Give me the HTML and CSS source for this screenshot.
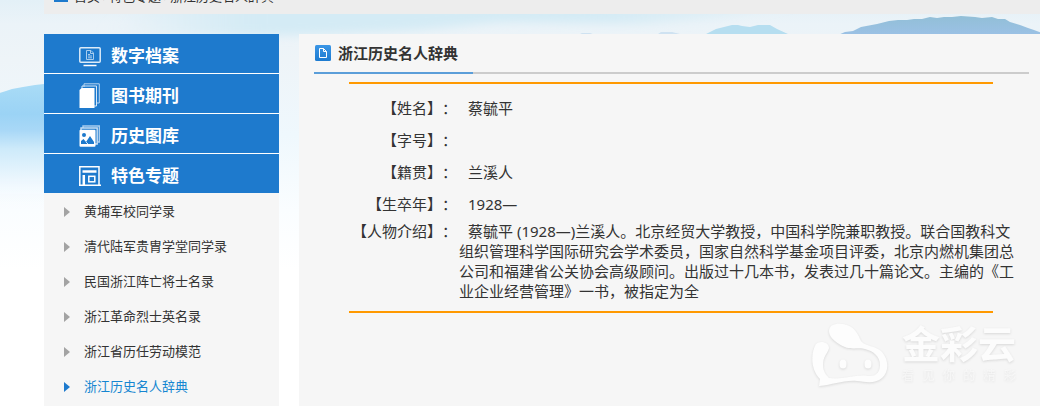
FILE: index.html
```html
<!DOCTYPE html>
<html lang="zh-CN">
<head>
<meta charset="utf-8">
<meta name="viewport" content="width=device-width, initial-scale=1">
<title>浙江历史名人辞典</title>
<link rel="stylesheet" href="styles.css">
</head>
<body>
<svg class="scenery" viewBox="0 0 1040 300" preserveAspectRatio="none" aria-hidden="true">
  <defs>
    <linearGradient id="sky" x1="0" y1="0" x2="0" y2="1">
      <stop offset="0" stop-color="#e3f0f7"/><stop offset=".08" stop-color="#ebf3f8"/><stop offset=".2" stop-color="#eef4f8"/>
      <stop offset=".45" stop-color="#eff8fd"/><stop offset=".7" stop-color="#fafdff"/><stop offset=".9" stop-color="#fff"/>
    </linearGradient>
    <linearGradient id="glow" x1="0" y1="0" x2="1" y2="0">
      <stop offset="0" stop-color="#d4ebf5" stop-opacity="0"/><stop offset=".2" stop-color="#d4ebf5"/>
      <stop offset=".7" stop-color="#d4ebf5"/><stop offset="1" stop-color="#d6ecf5" stop-opacity="0"/>
    </linearGradient>
    <linearGradient id="hill" x1="0" y1="0" x2="0" y2="1">
      <stop offset="0" stop-color="#aadcf6"/><stop offset=".25" stop-color="#9bd3f5"/><stop offset=".38" stop-color="#a9d8f7"/>
      <stop offset=".52" stop-color="#cdeafa"/><stop offset=".75" stop-color="#eaf6fd"/><stop offset="1" stop-color="#fbfdff" stop-opacity="0"/>
    </linearGradient>
    <linearGradient id="ridge" x1="0" y1="0" x2="0" y2="1">
      <stop offset="0" stop-color="#92bfd7"/><stop offset="1" stop-color="#9cc1e6"/>
    </linearGradient>
    <filter id="soft" x="-5%" y="-40%" width="110%" height="180%"><feGaussianBlur stdDeviation="12 5"/></filter>
    <filter id="edge"><feGaussianBlur stdDeviation=".5"/></filter>
  </defs>
  <rect width="1040" height="300" fill="url(#sky)"/>
  <path filter="url(#soft)" fill="url(#glow)" d="M110 34L150 0H810L720 18L640 24L500 22L420 30L330 34L260 36Z"/>
  <path filter="url(#edge)" fill="url(#hill)" d="M-4 94L6 91L12 89L23 87L35 85L44 84L60 82V210H-4Z"/>
  <path filter="url(#edge)" fill="#cfe2f1" d="M576 36L582 33L590 33L598 36ZM655 36L661 32L672 32L684 35Z"/>
  <path filter="url(#edge)" fill="#b6def0" d="M704 35L716 29L724 27L732 25L738 25L742 26L750 27L758 25L770 25L777 29L788 34Z"/>
  <path filter="url(#edge)" fill="url(#ridge)" d="M838 35L845 32L853 31L861 27L877 24L889 21L898 20L907 20L914 19L922 19L930 17L937 18L944 17L952 17L961 16L975 17L982 18L992 17L998 19L1005 19L1010 22L1020 25L1028 28L1034 30L1042 33V36Z"/>
</svg>

<div class="page">
  <nav class="crumbs" aria-label="位置">
    <svg width="14" height="12" viewBox="0 0 14 12" aria-hidden="true"><path fill="#1e7acd" d="M7 0L13 5H11V10H14V12H0V10H3V5H1Z"/><path fill="#ededed" d="M6 7H8V10H6Z"/></svg>
    <a href="#">首页</a><span>›</span><a href="#">特色专题</a><span>›</span><a href="#">浙江历史名人辞典</a>
  </nav>

  <div class="columns">
    <aside class="sidebar">
      <nav class="menu">
        <a href="#">
          <svg class="icon" viewBox="0 0 22 22" fill="none" stroke="#dcebf8" aria-hidden="true"><rect x=".8" y="2.8" width="20.4" height="14.4" rx="1" stroke-width="1.5"/><path d="M7.5 5.5H12L14.5 8V14.5H7.5ZM11.5 5.5V8.5H14.5M9 9.5H11M9 11H13M9 12.8H13" stroke="#a9cdee"/><path d="M4.500 20.500H17.500" stroke="#fff" stroke-width="1.500"/></svg>
          数字档案</a>
        <a href="#">
          <svg class="icon icon-tall" viewBox="0 0 22 26" aria-hidden="true"><path d="M5 4V.8H20.300V20H18" fill="none" stroke="#b7d5f0"/><path d="M3 5V3H17.500V23H15" fill="none" stroke="#d6e7f7"/><path fill="#fff" d="M2.500 5H15.500V25H.5V7Z"/></svg>
          图书期刊</a>
        <a href="#">
          <svg class="icon" viewBox="0 0 22 22" aria-hidden="true"><path d="M4 3V1H20.300V17H19" fill="none" stroke="#a9cdee" stroke-width="1.400"/><path d="M2 5V3H18.200V19H16" fill="none" stroke="#c9dff4" stroke-width="1.400"/><rect x=".5" y="4.800" width="16" height="17" rx="1" fill="#fff"/><circle cx="5" cy="10" r="2" fill="#1e7acd"/><path fill="#1e7acd" d="M2 19V16L4.500 14L7 17L11 11L15 17V19Z"/><path stroke="#fff" stroke-width=".8" d="M7 17L9 19"/></svg>
          历史图库</a>
        <a href="#">
          <svg class="icon" viewBox="0 0 22 22" fill="none" stroke="#fff" aria-hidden="true"><path d="M.8 21V1.800H20V20.300M0 20.300H22" stroke-width="1.500"/><path d="M3.500 6.500H17.500" stroke-width="2.500"/><path d="M4.800 10V20" stroke-width="2.500"/><rect x="9.800" y="11.300" width="6" height="5.500" stroke-width="1.500"/></svg>
          特色专题</a>
      </nav>
      <ul class="submenu">
        <li><a href="#">黄埔军校同学录</a></li>
        <li><a href="#">清代陆军贵胄学堂同学录</a></li>
        <li><a href="#">民国浙江阵亡将士名录</a></li>
        <li><a href="#">浙江革命烈士英名录</a></li>
        <li><a href="#">浙江省历任劳动模范</a></li>
        <li><a href="#" class="current" aria-current="page">浙江历史名人辞典</a></li>
      </ul>
    </aside>

    <main class="content">
      <header class="title">
        <svg width="16" height="16" viewBox="0 0 16 16" aria-hidden="true"><defs><linearGradient id="badge" x1="0" y1="0" x2="0" y2="1"><stop offset="0" stop-color="#3b96e6"/><stop offset="1" stop-color="#1d7bd0"/></linearGradient></defs><rect width="16" height="16" rx="1.500" fill="url(#badge)"/><path d="M4.500 3.500H8.500L11.500 6.500V12.500H4.500ZM8.500 3.500V6.500H11.500" fill="none" stroke="#fff"/></svg>
        <h1>浙江历史名人辞典</h1>
      </header>
      <section class="record">
        <dl>
          <dt>【姓名】：</dt><dd>蔡毓平</dd>
          <dt>【字号】：</dt><dd></dd>
          <dt>【籍贯】：</dt><dd>兰溪人</dd>
          <dt>【生卒年】：</dt><dd>1928—</dd>
          <dt class="long">【人物介绍】：</dt>
          <dd class="long">蔡毓平 (1928—)兰溪人。北京经贸大学教授，中国科学院兼职教授。联合国教科文组织管理科学国际研究会学术委员，国家自然科学基金项目评委，北京内燃机集团总公司和福建省公关协会高级顾问。出版过十几本书，发表过几十篇论文。主编的《工业企业经营管理》一书，被指定为全</dd>
        </dl>
      </section>
      <div class="watermark">
        <svg width="78" height="66" viewBox="0 0 78 66" aria-hidden="true"><path fill="#fdfdfd" fill-rule="evenodd" d="M18 9C18 2 27 0 36 3C44 6 47 12 50 19C55 25 64 23 71 30C78 38 78 50 71 56C64 62 55 60 46 59C31 58 23 63 8 64L9 57C-1 47 0 30 5 22C9 18 18 20 18 26C17 31 12 34 12 43C12 49 15 53 18 56C32 58 45 52 57 54C66 55 69 49 69 43C69 34 62 29 54 27C45 25 38 29 28 22C22 18 18 14 18 9Z"/><ellipse cx="32" cy="42" rx="3.500" ry="4.500" fill="#fdfdfd"/><ellipse cx="57" cy="42" rx="3.500" ry="4.500" fill="#fdfdfd"/></svg>
        <div class="brand">
          <b>金彩云</b>
          <p><span>看</span><span>见</span><span>你</span><span>的</span><span>精</span><span>彩</span></p>
        </div>
      </div>
    </main>
  </div>
</div>
</body>
</html>
```
FILE: styles.css
```css
* {
  box-sizing: border-box;
}

body {
  margin: 0;
  background: #fff;
  color: #333;
  font-family: "Noto Sans", "Noto Sans CJK SC", sans-serif;
  font-size: 15px;
  text-spacing-trim: space-all;
}

a {
  color: inherit;
  text-decoration: none;
}

/* Hills and sky behind the page */
.scenery {
  position: absolute;
  top: 0;
  left: 0;
  z-index: -1;
  width: 100%;
  height: 300px;
}

.page {
  display: flex;
  flex-direction: column;
  gap: 20px;
  min-height: 100vh;
  padding-left: 44px;
}

/* Breadcrumb strip, scrolled partly out of view */
.crumbs {
  display: flex;
  align-items: flex-end;
  height: 14px;
  padding-left: 10px;
  overflow: hidden;
  background: #ededed;
  font-size: 13px;
  line-height: 36px;
}

.crumbs svg {
  flex: none;
  margin: 0 6px 12px 0;
}

.crumbs span {
  width: 9px;
  text-align: center;
}

.columns {
  display: flex;
  flex: 1;
  gap: 20px;
}

.sidebar {
  flex: none;
  width: 235px;
  background: #f6f6f6;
}

.menu {
  display: grid;
  gap: 1px;
  background: #fff;
}

.menu a {
  display: flex;
  align-items: center;
  gap: 10px;
  height: 39px;
  padding: 4px 0 0 35px;
  background: #1e7acd;
  color: #fff;
  font-size: 17px;
  font-weight: bold;
  line-height: 35px;
}

.icon {
  width: 22px;
  height: 22px;
}

.icon-tall {
  height: 26px;
}

.submenu {
  margin: 0;
  padding: 1px 0 0;
  list-style: none;
  font-size: 13px;
  line-height: 35px;
}

.submenu a {
  display: flex;
  align-items: center;
  gap: 14px;
  padding-left: 20px;
}

.submenu a::before {
  content: "";
  border: solid transparent;
  border-width: 5px 0 5px 6px;
  border-left-color: #a3a3a3;
}

.submenu .current {
  color: #1586d1;
}

.submenu .current::before {
  border-left-color: #1e7acd;
}

.content {
  position: relative;
  flex: 1;
  min-width: 0;
  background: #f6f6f6;
}

.title {
  display: flex;
  align-items: center;
  gap: 7px;
  height: 40px;
  margin: 0 11px 0 15px;
  padding-left: 1px;
  border-bottom: 2px solid;
  border-image: linear-gradient(to right, #5b9ed9 160px, #ccc 160px) 2;
}

.title h1 {
  margin: 0;
  font-size: 15px;
  line-height: 38px;
}

.record {
  padding: 8px 25px 0 50px;
}

.record::before,
.record::after {
  content: "";
  display: block;
  height: 2px;
  margin-right: 22px;
  background: #f90;
}

dl {
  display: grid;
  grid-template-columns: 108px 1fr;
  column-gap: 2px;
  margin: 0;
  padding: 8px 0 10px;
  line-height: 32px;
}

dt {
  text-align: right;
}

dd {
  margin: 0;
  text-indent: 9px;
}

.long {
  padding-top: 1px;
  line-height: 20px;
}

/* Brand mark laid over the lower corner of the panel */
.watermark {
  position: absolute;
  right: 24px;
  bottom: 18px;
  display: flex;
  gap: 13px;
  color: #fcfcfc;
  filter: drop-shadow(0 1px 1px #d8d8d8);
}

.brand b {
  display: block;
  font-size: 38px;
  line-height: 42px;
}

.brand p {
  display: flex;
  justify-content: space-between;
  margin: 0;
  font-size: 12px;
  line-height: 24px;
  opacity: 0.6;
}
```
